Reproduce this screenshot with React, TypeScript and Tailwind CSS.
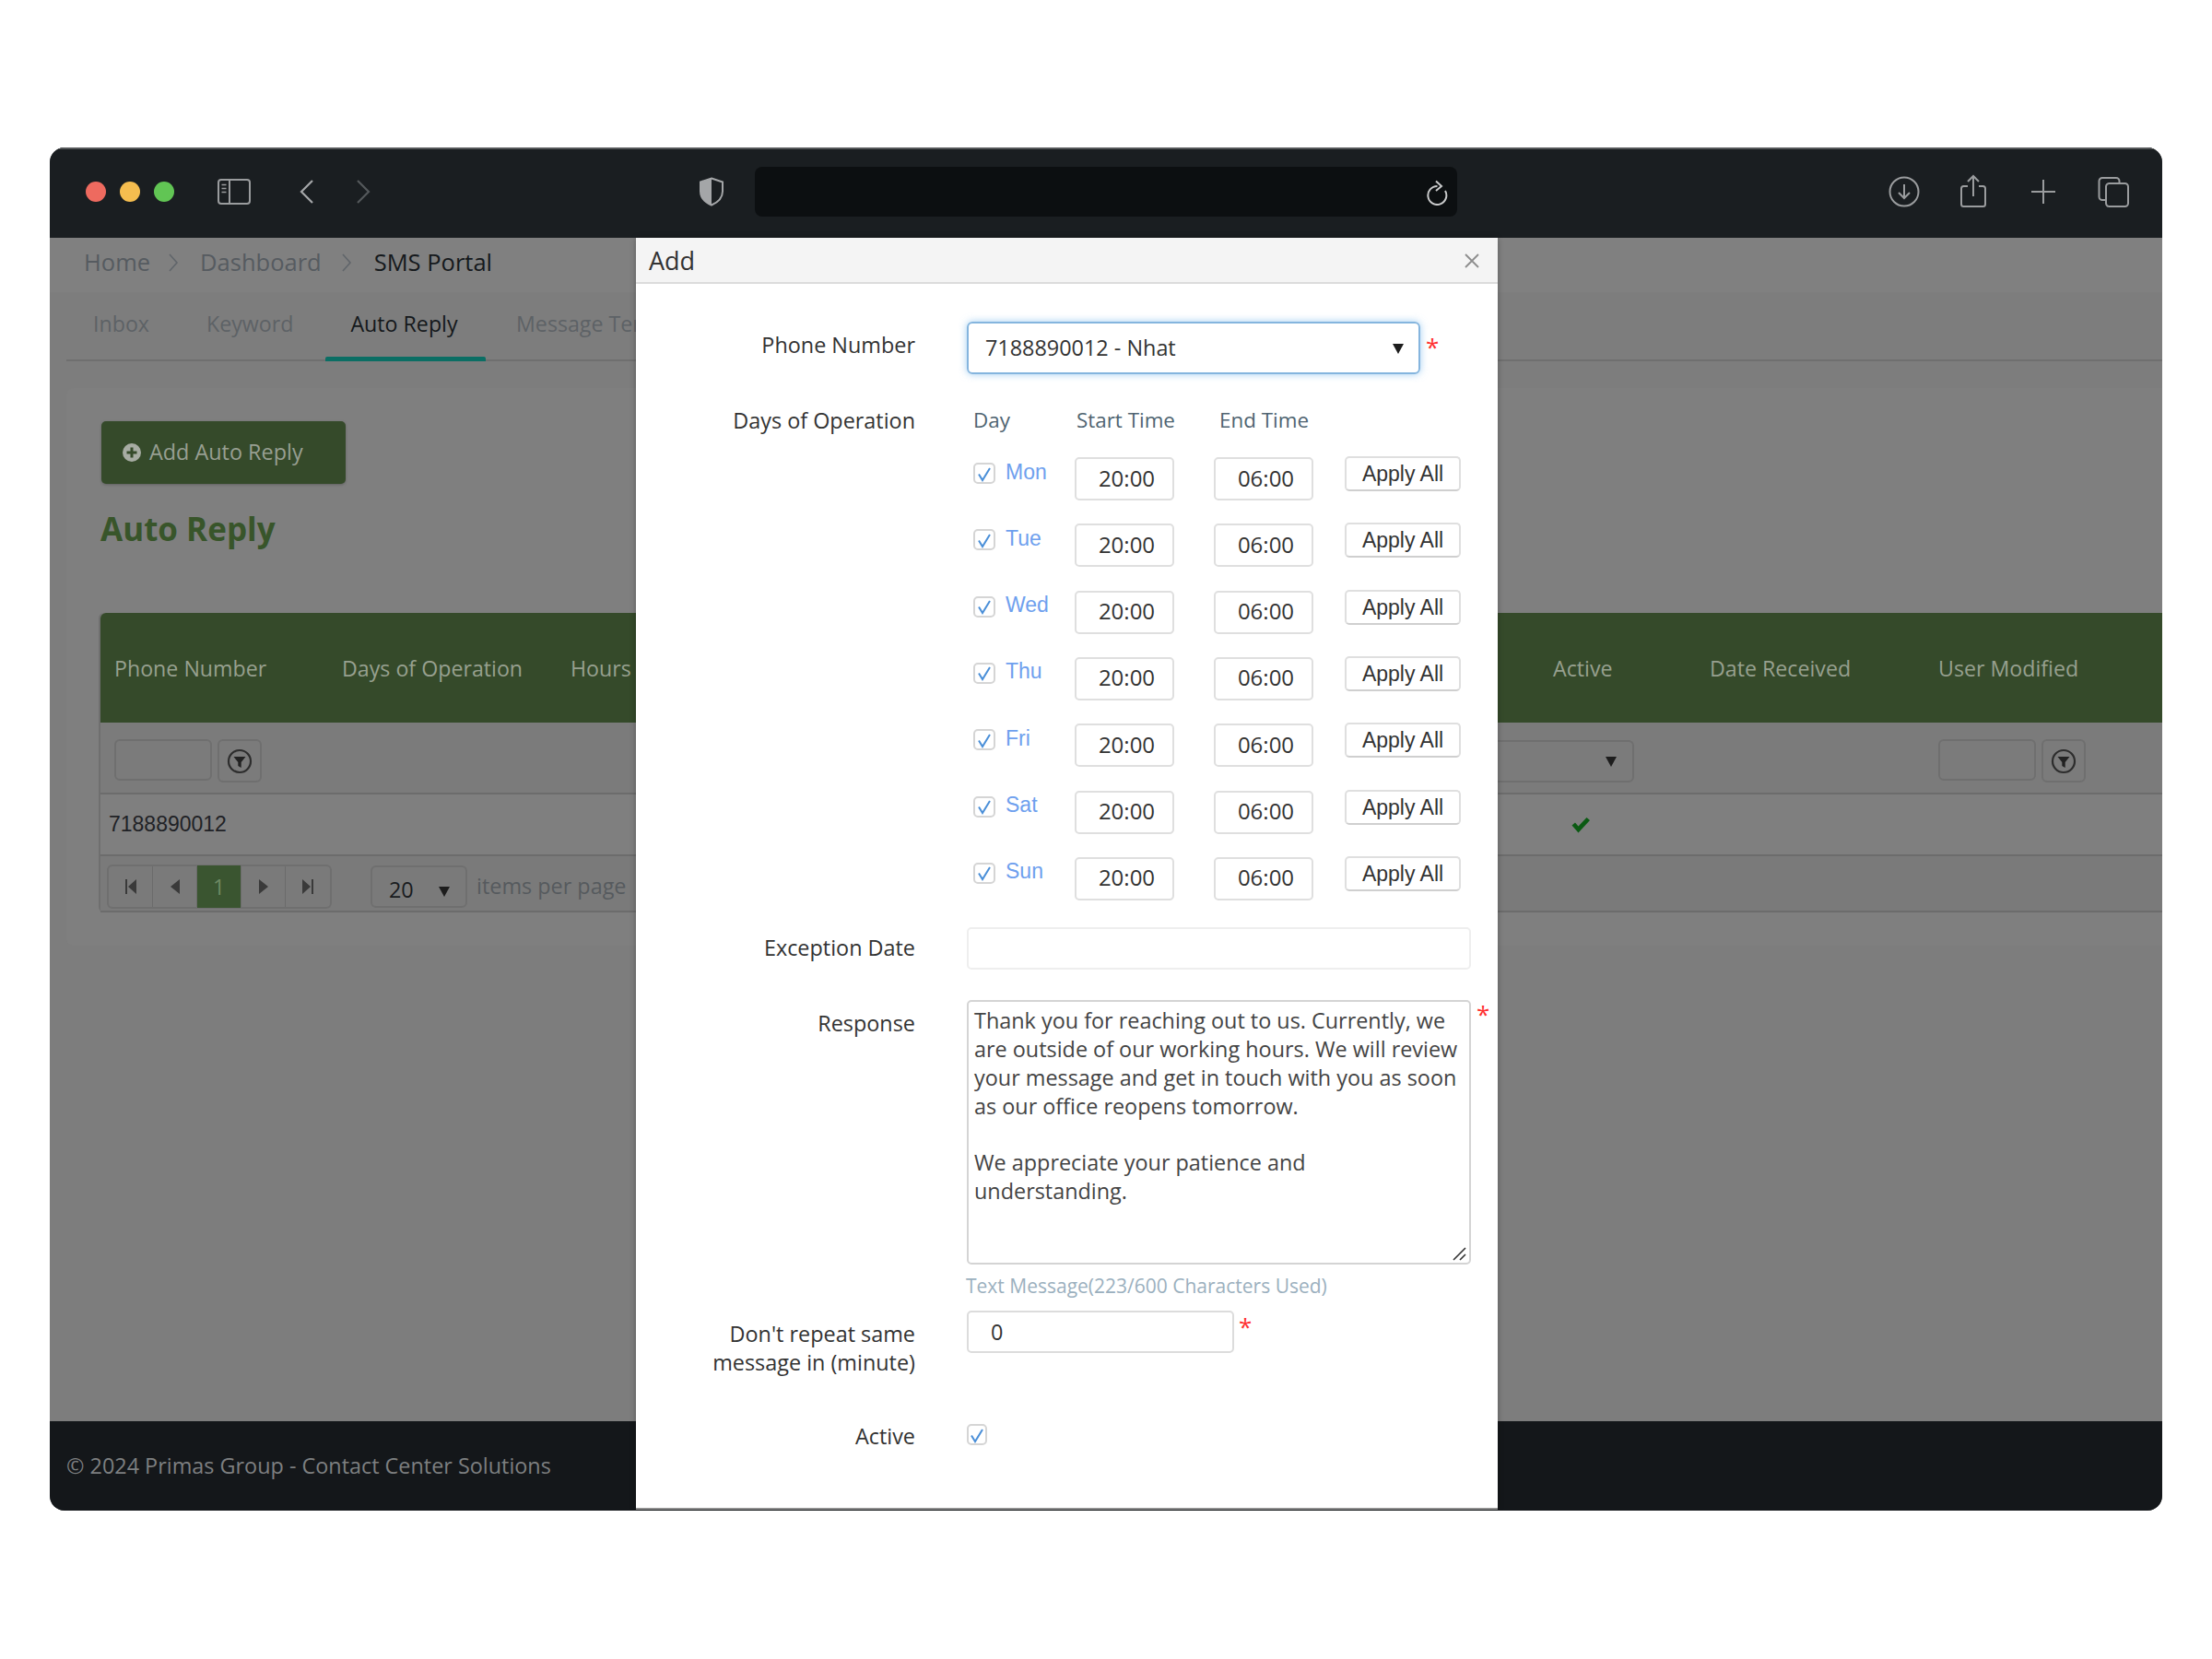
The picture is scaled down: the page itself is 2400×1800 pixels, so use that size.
import React from 'react';

const sans = "font-['Open_Sans',sans-serif]";
const arial = "font-['Liberation_Sans',Arial,sans-serif]";

const Dots = () => (
  <div className="flex gap-[15px] ml-[39px]">
    <span className="w-[22px] h-[22px] rounded-full bg-[#ee6a5f]" />
    <span className="w-[22px] h-[22px] rounded-full bg-[#f5bd4f]" />
    <span className="w-[22px] h-[22px] rounded-full bg-[#61c554]" />
  </div>
);

const TitleBar = () => (
  <div className="flex items-center h-[98px] pb-[4px] bg-[#1a1e21] border-t-2 border-[#55585a] shrink-0">
    <Dots />
    <svg width="38" height="30" viewBox="0 0 38 30" fill="none" stroke="#9a9c9e" strokeWidth="2" className="ml-[46px]">
      <rect x="2" y="2" width="34" height="26" rx="3" />
      <path d="M14 2v26" />
      <path d="M5.500 7.500h5M5.500 11.500h5M5.500 15.500h5" strokeWidth="1.600" />
    </svg>
    <svg width="18" height="28" viewBox="0 0 18 28" fill="none" stroke="#a5a7a9" strokeWidth="2.200" className="ml-[51px]">
      <path d="M15 2 3 14l12 12" />
    </svg>
    <svg width="18" height="28" viewBox="0 0 18 28" fill="none" stroke="#54585b" strokeWidth="2.200" className="ml-[43px]">
      <path d="m3 2 12 12L3 26" />
    </svg>
    <svg width="28" height="32" viewBox="0 0 28 32" className="ml-[355px]">
      <path d="M14 1.500 26 5.500v10c0 7-5 12-12 15-7-3-12-8-12-15v-10z" fill="none" stroke="#a4a6a8" strokeWidth="2" />
      <path d="M14 1.500v29c-7-3-12-8-12-15v-10z" fill="#a4a6a8" />
    </svg>
    <div className="flex items-center justify-end w-[762px] h-[54px] ml-[33px] pr-[10px] rounded-[8px] bg-[#0c0f11]">
      <svg width="24" height="30" viewBox="0 0 24 30" fill="none" stroke="#c9cacb" strokeWidth="2">
        <path d="M12.500 9A10 10 0 1 0 21 14" />
        <path d="m11 3.500 6 5.500-6 5" />
      </svg>
    </div>
    <svg width="34" height="34" viewBox="0 0 34 34" fill="none" stroke="#9a9c9e" strokeWidth="2" className="ml-[468px]">
      <circle cx="17" cy="17" r="15.500" />
      <path d="M17 9v15M11 18l6 6 6-6" />
    </svg>
    <svg width="30" height="38" viewBox="0 0 30 38" fill="none" stroke="#9a9c9e" strokeWidth="2" className="ml-[43px]">
      <path d="M9 13H4.500A2.500 2.500 0 0 0 2 15.500v17A2.500 2.500 0 0 0 4.500 35h21a2.500 2.500 0 0 0 2.500-2.500v-17a2.500 2.500 0 0 0-2.500-2.500H21" />
      <path d="M15 24V2M9 8l6-6 6 6" />
    </svg>
    <svg width="28" height="28" viewBox="0 0 28 28" fill="none" stroke="#9a9c9e" strokeWidth="2" className="ml-[47px]">
      <path d="M14 1v26M1 14h26" />
    </svg>
    <svg width="34" height="34" viewBox="0 0 34 34" fill="none" stroke="#9a9c9e" strokeWidth="2" className="ml-[45px]">
      <rect x="9" y="8" width="24" height="25" rx="3.500" />
      <path d="M9 26H5a3.500 3.500 0 0 1-3.500-3.500v-17A3.500 3.500 0 0 1 5 2h15a3.500 3.500 0 0 1 3.500 3.500V8" />
    </svg>
  </div>
);

const Chevron = () => (
  <svg width="12" height="22" viewBox="0 0 12 22" fill="none" stroke="#60656a" strokeWidth="1.600">
    <path d="m2 2 8 9-8 9" />
  </svg>
);

const Breadcrumb = () => (
  <div className={`flex items-center h-[59px] pb-[6px] pl-[37px] text-[25.500px] bg-[#808080] ${sans}`}>
    <span className="text-[#565b60]">Home</span>
    <span className="ml-[19px]"><Chevron /></span>
    <span className="ml-[23px] text-[#565b60]">Dashboard</span>
    <span className="ml-[21px]"><Chevron /></span>
    <span className="ml-[24px] text-[#15191c]">SMS Portal</span>
  </div>
);

const Tabs = () => (
  <div className={`flex h-[75px] ml-[18px] border-b-2 border-[#6f6f6f] text-[23.200px] ${sans}`}>
    <span className="pt-[17px] pl-[29px] w-[152px] text-[#5d6266]">Inbox</span>
    <span className="pt-[17px] w-[129px] text-[#5d6266]">Keyword</span>
    <span className="relative flex justify-center pt-[17px] pr-[3px] w-[174px] text-[#14181b]">
      Auto Reply
      <span className="absolute left-0 right-0 -bottom-[2px] h-[5px] rounded-t-[2px] bg-[#0b6e64]" />
    </span>
    <span className="pt-[17px] pl-[33px] text-[#5d6266] whitespace-nowrap">Message Templates</span>
  </div>
);

const FilterIcon = () => (
  <svg width="28" height="28" viewBox="0 0 28 28">
    <circle cx="14" cy="14" r="12" fill="none" stroke="#2d2d2d" strokeWidth="2.200" />
    <path d="M7.500 9h13l-4.800 6v6l-3.400-2v-4z" fill="#222" />
  </svg>
);

const FilterBox = () => (
  <div className="flex gap-[6px]">
    <div className="w-[106px] h-[45px] rounded-[6px] border-2 border-[#6f6f6f]" />
    <div className="flex items-center justify-center w-[48px] h-[47px] rounded-[6px] border-2 border-[#6f6f6f]">
      <FilterIcon />
    </div>
  </div>
);

const Triangle = ({ className }: { className?: string }) => (
  <svg width="12" height="12" viewBox="0 0 12 12" className={className}>
    <path d="M0 1h12L6 12z" fill="#1d1d1d" />
  </svg>
);

const PageCell = ({ children, active }: { children: React.ReactNode; active?: boolean }) => (
  <div className={`flex items-center justify-center w-[49px] border-r border-[#6b6b6b] last:border-r-0 ${active ? 'bg-[#3a5530] -my-[1px]' : ''}`}>
    {children}
  </div>
);

const Pager = () => (
  <div className="flex h-[48px] w-[244px] rounded-[6px] border-2 border-[#6f6f6f]">
    <PageCell>
      <svg width="14" height="16" viewBox="0 0 14 16" fill="#3a3a3a"><path d="M1 0h2v16H1zM13 0v16L4 8z" /></svg>
    </PageCell>
    <PageCell>
      <svg width="10" height="16" viewBox="0 0 10 16" fill="#3a3a3a"><path d="M10 0v16L0 8z" /></svg>
    </PageCell>
    <PageCell active>
      <span className={`text-[23px] text-[#6f8a63] ${sans}`}>1</span>
    </PageCell>
    <PageCell>
      <svg width="10" height="16" viewBox="0 0 10 16" fill="#3a3a3a"><path d="M0 0v16l10-8z" /></svg>
    </PageCell>
    <PageCell>
      <svg width="14" height="16" viewBox="0 0 14 16" fill="#3a3a3a"><path d="M1 0v16l9-8zM11 0h2v16h-2z" /></svg>
    </PageCell>
  </div>
);

const Table = () => (
  <div className={`mt-[71px] ml-[35px] rounded-l-[6px] border-l-2 border-[#6f6f6f] ${sans}`}>
    <div className="grid grid-cols-[263px_248px_1066px_170px_248px_1fr] items-center h-[119px] pt-[2px] pl-[15px] rounded-tl-[6px] bg-[#354a2a] text-[23.200px] text-[#97a08f] whitespace-nowrap">
      <span className="w-[247px]">Phone Number</span>
      <span className="-ml-[16px]">Days of Operation</span>
      <span className="-ml-[16px]">Hours</span>
      <span className="-ml-[16px]">Active</span>
      <span className="-ml-[16px]">Date Received</span>
      <span className="-ml-[16px]">User Modified</span>
    </div>
    <div className="flex items-center h-[78px] pt-[7px] pl-[15px] bg-[#7b7b7b] border-b-2 border-[#6c6c6c]">
      <FilterBox />
      <div className="flex items-center justify-end w-[300px] h-[46px] ml-[1189px] pr-[17px] rounded-[6px] border-2 border-[#6f6f6f]">
        <Triangle />
      </div>
      <div className="ml-[330px]"><FilterBox /></div>
    </div>
    <div className="flex items-center h-[67px] pl-[9px] bg-[#7f7f7f] border-b-2 border-[#6c6c6c]">
      <span className={`text-[23px] text-[#1f2226] ${arial}`}>7188890012</span>
      <svg width="22" height="18" viewBox="0 0 22 18" className="ml-[1458px]">
        <path d="M1.500 9.500 5 6.500l3.500 4L17.500 1 21 4 8.500 17.500z" fill="#0b5a13" />
      </svg>
    </div>
    <div className="flex items-center h-[61px] pt-[7px] pl-[7px] bg-[#7a7a7a] border-b-2 border-[#6c6c6c]">
      <Pager />
      <div className="relative flex items-center w-[105px] h-[46px] ml-[42px] pl-[18px] pt-[8px] rounded-[6px] border-2 border-[#6f6f6f] text-[23.400px] text-[#191c1f]">
        20
        <Triangle className="absolute right-[17px] top-[20px]" />
      </div>
      <span className="ml-[10px] text-[23.400px] text-[#565a5e]">items per page</span>
    </div>
  </div>
);

const Check = () => (
  <svg width="16" height="18" viewBox="0 0 16 18" fill="none" stroke="#4a8fd8" strokeWidth="2">
    <path d="M2 9.500 6 16 14 3" />
  </svg>
);

const CheckBox = ({ width }: { width: string }) => (
  <span className={`flex items-center justify-center h-[23px] ${width} rounded-[5px] border-2 border-[#d5d5d5] bg-white`}>
    <Check />
  </span>
);

const DAYS = ['Mon', 'Tue', 'Wed', 'Thu', 'Fri', 'Sat', 'Sun'];

const TimeBox = ({ value, className }: { value: string; className: string }) => (
  <div className={`flex items-center justify-center w-[108px] h-[47px] pl-[5px] pb-[2px] rounded-[5px] border-2 border-[#dfdfdf] text-[24px] text-[#333] ${className}`}>
    {value}
  </div>
);

const DayRow = ({ day }: { day: string }) => (
  <div className="flex items-start h-[72.330px]">
    <div className="flex items-center w-[110px] pt-[6px]">
      <CheckBox width="w-[24px]" />
      <span className={`ml-[11px] text-[23px] text-[#6ea0ee] leading-[20px] -mt-[4px] ${arial}`}>{day}</span>
    </div>
    <TimeBox value="20:00" className="" />
    <TimeBox value="06:00" className="ml-[43px]" />
    <button className={`w-[126px] h-[38px] ml-[34px] -mt-[1px] pb-[2px] rounded-[5px] border-2 border-[#dfdfdf] border-b-[#cfcfcf] text-[23px] text-[#333] ${arial}`}>
      Apply All
    </button>
  </div>
);

const Label = ({ children, className }: { children: React.ReactNode; className?: string }) => (
  <div className={`w-[303px] shrink-0 text-right text-[23.400px] leading-[31px] text-[#333] ${className ?? ''}`}>{children}</div>
);

const Star = ({ className }: { className?: string }) => (
  <span className={`text-[26px] leading-none text-[#ff3030] ${className ?? ''}`}>*</span>
);

const Modal = () => (
  <div className={`absolute left-[636px] top-0 w-[935px] h-[1380px] bg-white border-b-2 border-[#8f8f8f] shadow-[0_0_6px_rgba(0,0,0,0.3)] rounded-t-[4px] ${sans}`}>
    <div className="flex items-center justify-between h-[50px] pt-[2px] pl-[14px] pr-[19px] bg-[#f4f4f4] border-b-2 border-[#dcdcdc]">
      <span className="text-[27px] text-[#333]">Add</span>
      <svg width="18" height="18" viewBox="0 0 18 18" fill="none" stroke="#8d8d8d" strokeWidth="1.800">
        <path d="m2 2 14 14M16 2 2 16" />
      </svg>
    </div>
    <div className="flex mt-[41px]">
      <Label className="pt-[10px]">Phone Number</Label>
      <div className="relative flex items-center justify-between w-[492px] h-[57px] ml-[56px] pl-[18px] pr-[16px] rounded-[6px] border-2 border-[#85b5de] shadow-[0_0_8px_rgba(102,175,233,0.6)] text-[23.400px] text-[#333]">
        7188890012 - Nhat
        <Triangle />
      </div>
      <Star className="ml-[6px] mt-[14px]" />
    </div>
    <div className="flex mt-[33px]">
      <Label className="pt-[2px]">Days of Operation</Label>
      <div className="ml-[63px]">
        <div className="flex h-[57px] text-[22.400px] text-[#4f6471]">
          <span className="w-[112px]">Day</span>
          <span className="w-[155px]">Start Time</span>
          <span>End Time</span>
        </div>
        {DAYS.map((day) => <DayRow key={day} day={day} />)}
      </div>
    </div>
    <div className="flex mt-[4px]">
      <Label className="pt-[7px]">Exception Date</Label>
      <div className="w-[547px] h-[46px] ml-[56px] rounded-[5px] border-2 border-[#eeeeee]" />
    </div>
    <div className="flex mt-[33px]">
      <Label className="pt-[10px]">Response</Label>
      <div className="relative w-[547px] h-[287px] ml-[56px] pl-[6px] pr-[9px] pt-[5px] rounded-[5px] border-2 border-[#d4d4d4] text-[23.400px] leading-[30.800px] text-[#444]">
        <p>Thank you for reaching out to us. Currently, we are outside of our working hours. We will review your message and get in touch with you as soon as our office reopens tomorrow.</p>
        <p className="mt-[30.800px]">We appreciate your patience and understanding.</p>
        <svg width="16" height="16" viewBox="0 0 16 16" fill="none" stroke="#333" strokeWidth="1.600" className="absolute right-[2px] bottom-[2px]">
          <path d="M1 15 14 2M8 15l6-6" />
        </svg>
      </div>
      <Star className="ml-[6px] mt-[2px]" />
    </div>
    <div className="ml-[358px] mt-[9px] text-[21px] leading-[28px] text-[#9bb0be]">Text Message(223/600 Characters Used)</div>
    <div className="flex mt-[13px]">
      <Label className="pt-[10px]">Don&apos;t repeat same<br />message in (minute)</Label>
      <div className="flex items-center w-[290px] h-[46px] ml-[56px] pl-[24px] rounded-[5px] border-2 border-[#dcdcdc] text-[23.400px] text-[#333]">0</div>
      <Star className="ml-[5px] mt-[4px]" />
    </div>
    <div className="flex mt-[49px]">
      <Label>Active</Label>
      <div className="ml-[56px] mt-[2px]"><CheckBox width="w-[22px]" /></div>
    </div>
  </div>
);

export default function App() {
  return (
    <div className="w-[2400px] h-[1800px] bg-white pt-[160px] pl-[54px]">
      <div className="flex flex-col w-[2292px] h-[1479px] overflow-hidden rounded-[16px] bg-[#808080]">
        <TitleBar />
        <div className="relative flex flex-col flex-1 min-h-0">
          <Breadcrumb />
          <div className="flex-1 min-h-0 bg-[#7d7d7d]">
            <Tabs />
            <div className="h-[605px] mt-[29px] ml-[18px] pt-[36px] rounded-l-[8px] bg-[#7f7f7f]">
              <div className={`flex items-center w-[265px] h-[68px] ml-[38px] pl-[23px] rounded-[5px] bg-[#354a2a] text-[23.400px] text-[#989f92] shadow-[0_1px_3px_rgba(0,0,0,0.25)] ${sans}`}>
                <svg width="20" height="20" viewBox="0 0 20 20" className="mr-[9px]">
                  <circle cx="10" cy="10" r="10" fill="#a7aca3" />
                  <path d="M8.500 4.500h3v4h4v3h-4v4h-3v-4h-4v-3h4z" fill="#354a2a" />
                </svg>
                Add Auto Reply
              </div>
              <h1 className={`mt-[29px] ml-[37px] text-[35px] leading-[40px] font-bold text-[#38552a] ${sans}`}>Auto Reply</h1>
              <Table />
            </div>
          </div>
          <div className={`flex items-center h-[97px] pl-[18px] bg-[#14171a] text-[23.400px] text-[#7d7f80] ${sans}`}>
            © 2024 Primas Group - Contact Center Solutions
          </div>
          <Modal />
        </div>
      </div>
    </div>
  );
}
